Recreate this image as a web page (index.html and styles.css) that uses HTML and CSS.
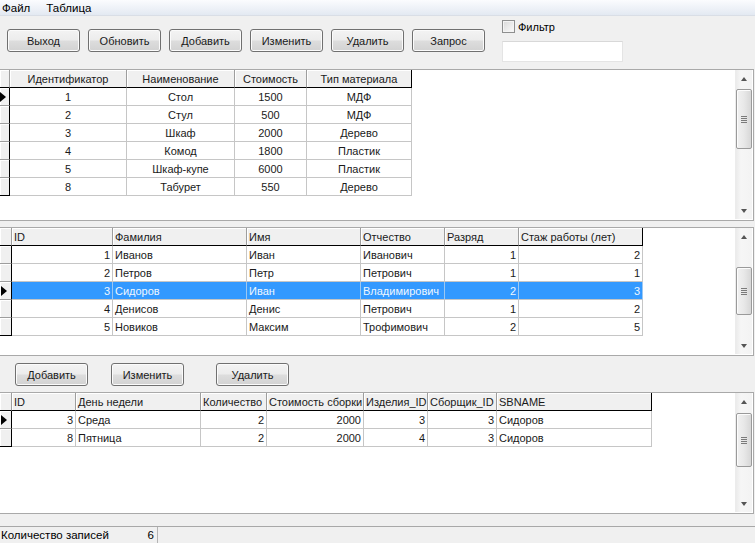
FILE: index.html
```html
<!DOCTYPE html>
<html lang="ru">
<head>
<meta charset="utf-8">
<title>Мебель</title>
<link rel="stylesheet" href="styles.css">
</head>
<body>
<div class="app">
  <nav class="menubar">
    <span class="menu-item">Файл</span>
    <span class="menu-item">Таблица</span>
  </nav>

  <div class="toolbar">
    <div class="btn-row">
      <button class="btn">Выход</button>
      <button class="btn">Обновить</button>
      <button class="btn">Добавить</button>
      <button class="btn">Изменить</button>
      <button class="btn">Удалить</button>
      <button class="btn">Запрос</button>
    </div>
    <div class="filter">
      <label class="chk"><span class="box"></span>Фильтр</label>
      <input class="filter-input" type="text">
    </div>
  </div>

  <section class="panel p1">
    <div class="grid g1">
      <div class="hc corner"></div>
      <div class="hc">Идентификатор</div>
      <div class="hc">Наименование</div>
      <div class="hc">Стоимость</div>
      <div class="hc last">Тип материала</div>

      <div class="rh cur"></div><div>1</div><div>Стол</div><div>1500</div><div>МДФ</div>
      <div class="rh"></div><div>2</div><div>Стул</div><div>500</div><div>МДФ</div>
      <div class="rh"></div><div>3</div><div>Шкаф</div><div>2000</div><div>Дерево</div>
      <div class="rh"></div><div>4</div><div>Комод</div><div>1800</div><div>Пластик</div>
      <div class="rh"></div><div>5</div><div>Шкаф-купе</div><div>6000</div><div>Пластик</div>
      <div class="rh lastrow"></div><div>8</div><div>Табурет</div><div>550</div><div>Дерево</div>
    </div>
    <div class="scrollbar sb1">
      <span class="sb-btn"><i class="arr up"></i></span>
      <span class="sb-thumb"><i class="grip"></i></span>
      <span class="sb-btn end"><i class="arr down"></i></span>
    </div>
  </section>

  <section class="panel p2">
    <div class="grid g2">
      <div class="hc corner"></div>
      <div class="hc">ID</div>
      <div class="hc">Фамилия</div>
      <div class="hc">Имя</div>
      <div class="hc">Отчество</div>
      <div class="hc">Разряд</div>
      <div class="hc last">Стаж работы (лет)</div>

      <div class="rh"></div><div class="num">1</div><div>Иванов</div><div>Иван</div><div>Иванович</div><div class="num">1</div><div class="num">2</div>
      <div class="rh"></div><div class="num">2</div><div>Петров</div><div>Петр</div><div>Петрович</div><div class="num">1</div><div class="num">1</div>
      <div class="rh cur"></div><div class="num sel">3</div><div class="sel">Сидоров</div><div class="sel">Иван</div><div class="sel">Владимирович</div><div class="num sel">2</div><div class="num sel">3</div>
      <div class="rh"></div><div class="num">4</div><div>Денисов</div><div>Денис</div><div>Петрович</div><div class="num">1</div><div class="num">2</div>
      <div class="rh lastrow"></div><div class="num">5</div><div>Новиков</div><div>Максим</div><div>Трофимович</div><div class="num">2</div><div class="num">5</div>
    </div>
    <div class="scrollbar sb2">
      <span class="sb-btn"><i class="arr up"></i></span>
      <span class="sb-thumb"><i class="grip"></i></span>
      <span class="sb-btn end"><i class="arr down"></i></span>
    </div>
  </section>

  <div class="actions">
    <button class="btn">Добавить</button>
    <button class="btn b-edit">Изменить</button>
    <button class="btn b-del">Удалить</button>
  </div>

  <section class="panel p3">
    <div class="grid g3">
      <div class="hc corner"></div>
      <div class="hc">ID</div>
      <div class="hc">День недели</div>
      <div class="hc">Количество</div>
      <div class="hc">Стоимость сборки</div>
      <div class="hc">Изделия_ID</div>
      <div class="hc">Сборщик_ID</div>
      <div class="hc last">SBNAME</div>

      <div class="rh cur"></div><div class="num">3</div><div>Среда</div><div class="num">2</div><div class="num">2000</div><div class="num">3</div><div class="num">3</div><div>Сидоров</div>
      <div class="rh lastrow"></div><div class="num">8</div><div>Пятница</div><div class="num">2</div><div class="num">2000</div><div class="num">4</div><div class="num">3</div><div>Сидоров</div>
    </div>
    <div class="scrollbar sb3">
      <span class="sb-btn"><i class="arr up"></i></span>
      <span class="sb-thumb"><i class="grip"></i></span>
      <span class="sb-btn end"><i class="arr down"></i></span>
    </div>
  </section>

  <footer class="status">
    <div class="st-cell">
      <span class="st-label">Количество записей</span>
      <span class="st-val">6</span>
    </div>
  </footer>
</div>
</body>
</html>
```

FILE: styles.css
```css
* { box-sizing: border-box; }

html, body { margin: 0; padding: 0; }

body {
  width: 755px;
  height: 543px;
  overflow: hidden;
  background: #f0f0f0;
  font-family: "Liberation Sans", Arial, sans-serif;
  font-size: 11px;
  color: #000;
}

.app {
  display: flex;
  flex-direction: column;
  height: 543px;
}

/* menu */
.menubar {
  height: 16px;
  display: flex;
  align-items: center;
  padding-left: 2px;
  background: linear-gradient(#fbfcfe, #e3e9f2);
  border-bottom: 1px solid #d9dee6;
  font-size: 11.5px;
}
.menu-item + .menu-item { margin-left: 16px; }

/* toolbar */
.toolbar {
  height: 53px;
  display: flex;
  padding-left: 7px;
}
.btn-row {
  display: flex;
  gap: 8px;
  margin-top: 13px;
  align-self: flex-start;
}
.btn {
  width: 73px;
  height: 23px;
  padding: 0;
  border: 1px solid #707070;
  border-radius: 3px;
  background: linear-gradient(#f3f3f3 0%, #ececec 48%, #dddddd 52%, #d2d2d2 100%);
  box-shadow: inset 0 0 0 1px #fbfbfb;
  font-family: "Liberation Sans", Arial, sans-serif;
  font-size: 11px;
  color: #1a1a1a;
}
.filter {
  margin-left: 17px;
  padding-top: 4px;
  display: flex;
  flex-direction: column;
}
.chk {
  display: flex;
  align-items: center;
  gap: 3px;
  height: 13px;
  font-size: 11px;
}
.box {
  width: 13px;
  height: 13px;
  border: 1px solid #8e8f8f;
  background: linear-gradient(135deg, #d9d9d9, #fbfbfb);
  box-shadow: inset 0 0 0 1px #f4f4f4;
}
.filter-input {
  margin-top: 8px;
  width: 121px;
  height: 21px;
  border: 1px solid #e4e4e4;
  border-top-color: #d8d8d8;
  background: #fff;
  padding: 0;
  outline: none;
}

/* grid panels */
.panel {
  display: flex;
  width: 754px;
  background: #fff;
  border: 1px solid #a9a9a9;
  border-left: none;
}
.p1 { height: 152px; }
.p2 { height: 129px; margin-top: 6px; }
.p3 { height: 122px; }

.grid {
  display: grid;
  align-self: flex-start;
  color: #1a1a1a;
}
.g1 { grid-template-columns: 10px 117px 108px 72px 105px; }
.g2 { grid-template-columns: 12px 101px 134px 114px 84px 74px 124px; }
.g3 { grid-template-columns: 12px 64px 125px 66px 97px 64px 69px 155px; }

.grid > div {
  height: 18px;
  line-height: 18px;
  padding: 0 2px;
  white-space: nowrap;
  overflow: hidden;
  border-right: 1px solid #c6c6c6;
  border-bottom: 1px solid #c6c6c6;
}
.g1 > div { text-align: center; }

.grid > .hc {
  background: #f0f0f0;
  border-right-color: #9d9d9d;
  border-bottom-color: #000;
  box-shadow: inset 1px 1px #fff;
}
.grid > .hc.last { border-right-color: #000; }

.grid > .rh {
  background: #f0f0f0;
  border-right-color: #000;
  border-bottom-color: #9d9d9d;
  box-shadow: inset 1px 1px #fff;
  padding: 0;
  display: flex;
  align-items: center;
}
.grid > .rh.lastrow { border-bottom-color: #000; }
.g2 > .rh, .g3 > .rh { padding-left: 1px; }

.rh.cur::before {
  content: "";
  width: 0;
  height: 0;
  border-left: 6px solid #000;
  border-top: 5px solid transparent;
  border-bottom: 5px solid transparent;
}

.grid > .num { text-align: right; }

.grid > .sel {
  background: #3399ff;
  color: #eef7ff;
  border-right-color: #9cc8f2;
}

/* scrollbars */
.scrollbar {
  width: 17px;
  margin-left: auto;
  margin-right: 1px;
  margin-bottom: 1px;
  display: flex;
  flex-direction: column;
  align-items: center;
  background: linear-gradient(to right, #ebebeb, #f6f6f6 30%, #f3f3f3);
  border-left: 1px solid #ececec;
}

.sb-btn {
  width: 17px;
  height: 17px;
  display: flex;
  align-items: center;
  justify-content: center;
  flex-shrink: 0;
}
.sb-btn.end { margin-top: auto; }

.arr {
  width: 0;
  height: 0;
  border-left: 3.5px solid transparent;
  border-right: 3.5px solid transparent;
}
.arr.up { border-bottom: 4px solid #555; }
.arr.down { border-top: 4px solid #555; }

.sb-thumb {
  width: 16px;
  border: 1px solid #9a9a9a;
  border-radius: 2px;
  background: linear-gradient(to right, #f1f1f1, #e8e8e8 50%, #d7d7d7);
  box-shadow: inset 1px 1px #fcfcfc;
  display: flex;
  align-items: center;
  justify-content: center;
  flex-shrink: 0;
}
.sb1 .sb-thumb { margin-top: 2px; height: 60px; }
.sb2 .sb-thumb { margin-top: 22px; height: 48px; }
.sb3 .sb-thumb { margin-top: 3px; height: 54px; }

.grip {
  width: 6px;
  height: 7px;
  background: repeating-linear-gradient(#7a7a7a 0 1px, transparent 1px 2px);
}

/* bottom buttons */
.actions {
  height: 36px;
  display: flex;
  align-items: flex-start;
  padding-top: 7px;
  padding-left: 15px;
}
.b-edit { margin-left: 23px; }
.b-del { margin-left: 32px; }

/* status bar */
.status {
  margin-top: 12px;
  height: 17px;
  border-top: 1px solid #a8a8a8;
  display: flex;
  font-size: 11.5px;
}
.st-cell {
  width: 158px;
  height: 16px;
  display: flex;
  align-items: center;
  border-right: 1px solid #b4b4b4;
  padding-left: 1px;
}
.st-label {
  white-space: nowrap;
}
.st-val {
  margin-left: auto;
  padding-right: 3px;
}
```
